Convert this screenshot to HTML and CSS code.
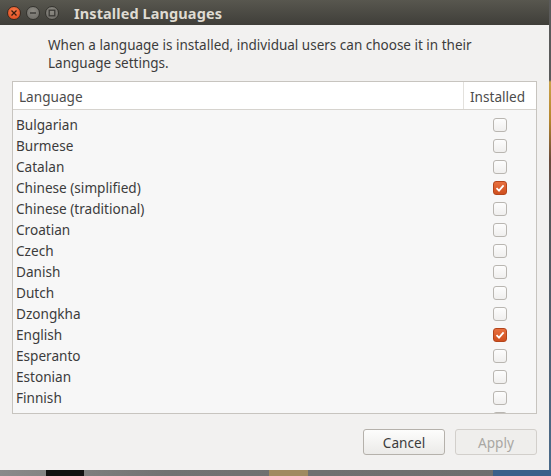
FILE: index.html
```html
<!DOCTYPE html>
<html>
<head>
<meta charset="utf-8">
<link rel="stylesheet" href="styles.css">
</head>
<body>
<div class="screen">
  <div class="window">
    <div class="titlebar">
      <div class="wbtns">
        <span class="wb close"><svg width="8" height="8" viewBox="0 0 8 8"><path d="M1.5 1.5 L6.5 6.5 M6.5 1.5 L1.5 6.5" stroke="#3a1c0e" stroke-width="1.3"/></svg></span>
        <span class="wb"><svg width="8" height="8" viewBox="0 0 8 8"><path d="M1 4 H7" stroke="#3a3935" stroke-width="1.4"/></svg></span>
        <span class="wb"><svg width="8" height="8" viewBox="0 0 8 8"><rect x="1.2" y="1.2" width="5.6" height="5.6" fill="none" stroke="#3a3935" stroke-width="1.3"/></svg></span>
      </div>
      <div class="title">Installed Languages</div>
    </div>
    <div class="content">
      <p class="desc">When a language is installed, individual users can choose it in their Language settings.</p>
      <div class="table">
        <div class="thead">
          <div class="th lang">Language</div>
          <div class="th inst">Installed</div>
        </div>
        <div class="tbody">
          <div class="row"><span class="name">Bulgarian</span><span class="cb"></span></div>
          <div class="row"><span class="name">Burmese</span><span class="cb"></span></div>
          <div class="row"><span class="name">Catalan</span><span class="cb"></span></div>
          <div class="row"><span class="name">Chinese (simplified)</span><span class="cb on"><svg width="10" height="10" viewBox="0 0 10 10"><path d="M1.5 5.2 L4 7.6 L8.6 2.4" fill="none" stroke="#fff" stroke-width="1.8"/></svg></span></div>
          <div class="row"><span class="name">Chinese (traditional)</span><span class="cb"></span></div>
          <div class="row"><span class="name">Croatian</span><span class="cb"></span></div>
          <div class="row"><span class="name">Czech</span><span class="cb"></span></div>
          <div class="row"><span class="name">Danish</span><span class="cb"></span></div>
          <div class="row"><span class="name">Dutch</span><span class="cb"></span></div>
          <div class="row"><span class="name">Dzongkha</span><span class="cb"></span></div>
          <div class="row"><span class="name">English</span><span class="cb on"><svg width="10" height="10" viewBox="0 0 10 10"><path d="M1.5 5.2 L4 7.6 L8.6 2.4" fill="none" stroke="#fff" stroke-width="1.8"/></svg></span></div>
          <div class="row"><span class="name">Esperanto</span><span class="cb"></span></div>
          <div class="row"><span class="name">Estonian</span><span class="cb"></span></div>
          <div class="row"><span class="name">Finnish</span><span class="cb"></span></div>
          <div class="row"><span class="name">French</span><span class="cb"></span></div>
        </div>
      </div>
      <div class="actions">
        <button class="btn">Cancel</button>
        <button class="btn disabled">Apply</button>
      </div>
    </div>
  </div>
  <div class="desk-right"></div>
</div>
<div class="desk-bottom">
  <span class="dk dk1"></span>
  <span class="dk dk2"></span>
  <span class="dk dk3"></span>
</div>
</body>
</html>
```
FILE: styles.css
```css
* { box-sizing: border-box; }
html, body { margin: 0; padding: 0; }
body {
  width: 551px;
  height: 476px;
  overflow: hidden;
  background: #6b6b6b;
  font-family: "Noto Sans", "DejaVu Sans", sans-serif;
}
.screen { display: flex; height: 470px; }
.window {
  width: 549px;
  height: 470px;
  background: #f2f1f0;
  display: flex;
  flex-direction: column;
}
.desk-right {
  width: 2px;
  background: linear-gradient(#5a5a5a 0, #5a5a5a 80px, #c9a24a 82px, #b5862e 120px, #6a4a3a 160px, #555 200px, #4a6a8a 470px);
}
.titlebar {
  height: 25px;
  background: linear-gradient(#58574f, #3f3e39);
  display: flex;
  align-items: center;
  padding-left: 7px;
}
.wbtns { display: flex; gap: 5px; }
.wb {
  width: 14px; height: 14px; border-radius: 50%;
  background: radial-gradient(circle at 50% 35%, #8d8b84, #6b6964);
  border: 1px solid #35342f;
  display: flex; align-items: center; justify-content: center;
}
.wb.close { background: radial-gradient(circle at 50% 35%, #f57a4a, #e0461a); border-color: #3a2a20; }
.title {
  margin-left: 15px;
  color: #dfdbd2;
  font-weight: bold;
  font-size: 14.5px;
  letter-spacing: 0.1px;
}
.content {
  flex: 1;
  display: flex;
  flex-direction: column;
  padding: 11px 12px 13px 12px;
}
.desc {
  margin: 0 0 0 36px;
  color: #3c3c3c;
  font-size: 13.5px;
  line-height: 18px;
}
.table {
  margin-top: 9px;
  width: 525px;
  height: 333px;
  border: 1px solid #c7c4bf;
  background: #f7f7f7;
  overflow: hidden;
}
.thead {
  display: flex;
  height: 28px;
  background: #fff;
  border-bottom: 1px solid #d6d3ce;
}
.th {
  font-size: 13.6px;
  color: #4c4c4c;
  display: flex;
  align-items: center;
  padding-top: 1px;
}
.th.lang { flex: 1; padding-left: 6px; border-right: 1px solid #e3e1dd; }
.th.inst { width: 72px; padding-left: 6px; }
.tbody { padding-top: 4px; }
.row {
  height: 21px;
  display: flex;
  align-items: center;
  justify-content: space-between;
  padding-left: 3px;
  padding-right: 29px;
}
.name { font-size: 13.6px; color: #3c3c3c; }
.cb {
  width: 14px; height: 14px;
  border: 1px solid #b9b6b1;
  border-radius: 3px;
  background: linear-gradient(#fdfdfd, #f0efee);
  display: flex; align-items: center; justify-content: center;
}
.cb.on {
  background: linear-gradient(#e8703f, #cf4f1e);
  border-color: #b4451b;
}
.actions {
  margin-top: 15px;
  display: flex;
  justify-content: flex-end;
  gap: 10px;
}
.btn {
  width: 82px;
  height: 26px;
  border: 1px solid #b5b1ab;
  border-radius: 3px;
  background: linear-gradient(#fdfdfc, #ebeae8);
  font-family: "Noto Sans", "DejaVu Sans", sans-serif;
  font-size: 13.6px;
  color: #3c3c3c;
  padding: 0;
}
.btn.disabled {
  background: #efeeec;
  border-color: #d2cfcb;
  color: #a9a7a3;
}
.desk-bottom {
  height: 6px;
  background: linear-gradient(90deg, #8a8a8a, #727272 30%, #6d6d6d);
  display: flex;
}
.dk { display: block; height: 6px; }
.dk1 { margin-left: 46px; width: 39px; background: #111; }
.dk2 { margin-left: 185px; width: 40px; background: #a08a60; }
.dk3 { margin-left: 185px; width: 60px; background: #3a5f8a; }
```
